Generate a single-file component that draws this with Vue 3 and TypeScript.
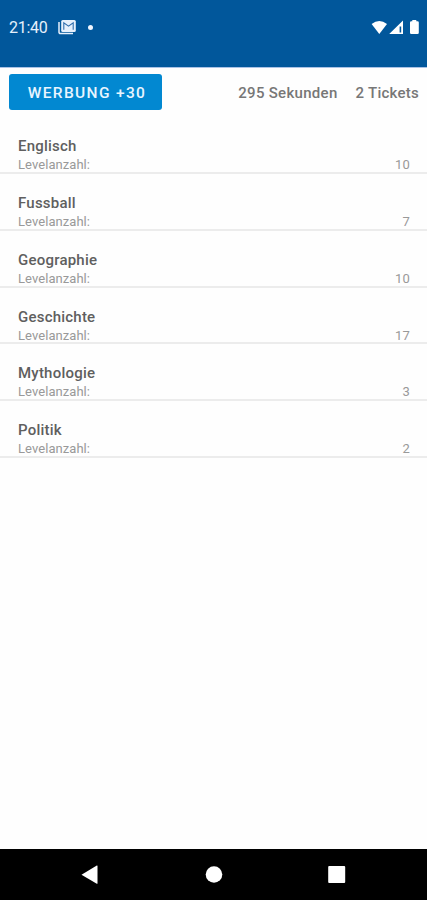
<script setup lang="ts">
interface Category {
  name: string
  levels: number
}

const categories: Category[] = [
  { name: 'Englisch', levels: 10 },
  { name: 'Fussball', levels: 7 },
  { name: 'Geographie', levels: 10 },
  { name: 'Geschichte', levels: 17 },
  { name: 'Mythologie', levels: 3 },
  { name: 'Politik', levels: 2 },
]
</script>

<template>
  <div class="screen">
    <header class="status">
      <span class="clock">21:40</span>
      <svg class="mail" width="18" height="15" viewBox="0 0 18 15">
        <path d="M1 2v10.2a1.3 1.3 0 0 0 1.3 1.3H15" fill="none" stroke="#e6f0fc" stroke-width="1.5" />
        <rect x="3.2" y="0" width="14.6" height="12" rx="1.5" fill="#e6f0fc" />
        <path d="M5.8 9.8V2.8l4.7 3.3L15.2 2.8v7" fill="none" stroke="#2f6dac" stroke-width="1.1" />
      </svg>
      <span class="dot"></span>
      <svg class="signals" width="50" height="16" viewBox="0 0 50 16">
        <path d="M0.6 4.1Q8.3-1.9 16 4.1L8.3 14Z" fill="#fff" />
        <path d="M32 0.4V14H18.2ZM28.6 6.4v6.2h1.6V6.4Z" fill="#fff" fill-rule="evenodd" />
        <path d="M41.3 1.3V.1h4v1.2h1.2q1.3 0 1.3 1.3v10.2q0 1.2-1.3 1.2h-6.2q-1.3 0-1.3-1.2V2.6q0-1.3 1.3-1.3Z" fill="#fff" />
      </svg>
    </header>
    <section class="toolbar">
      <button class="ad" type="button">WERBUNG +30</button>
      <span class="seconds">295 Sekunden</span>
      <span class="tickets">2 Tickets</span>
    </section>
    <ul class="list">
      <li v-for="category in categories" :key="category.name" class="row">
        <div class="name">{{ category.name }}</div>
        <div class="detail">
          <span class="label">Levelanzahl:</span>
          <span>{{ category.levels }}</span>
        </div>
      </li>
    </ul>
    <nav class="nav">
      <svg width="18" height="20" viewBox="0 0 18 20"><path d="M.5 9.7 15.8.6Q16.5.3 16.5 1.1V18.2Q16.5 19 15.8 18.7Z" fill="#fff" /></svg>
      <svg width="18" height="20" viewBox="0 0 18 20"><circle cx="9" cy="9.5" r="8.3" fill="#fff" /></svg>
      <svg width="18" height="20" viewBox="0 0 18 20"><rect x="0.2" y="1" width="17" height="17" rx="1" fill="#fff" /></svg>
    </nav>
  </div>
</template>

<style>
body {
  background: #fff;
}
</style>

<style scoped>
.screen {
  box-sizing: border-box;
  width: 427px;
  height: 900px;
  display: flex;
  flex-direction: column;
  background: #fefefe;
  font-family: Roboto, sans-serif;
  overflow: hidden;
}
.status {
  box-sizing: border-box;
  height: 68px;
  flex: none;
  display: flex;
  align-items: flex-start;
  padding: 20px 6px 0 9px;
  background: #01579b;
  border-bottom: 1px solid #a9c2e6;
}
.clock {
  width: 49px;
  font-size: 16px;
  line-height: 16px;
  letter-spacing: -0.3px;
  color: #e6f0fc;
}
.mail {
  flex: none;
}
.dot {
  width: 5px;
  height: 5px;
  margin: 5px 0 0 12px;
  border-radius: 50%;
  background: #f0f6ff;
}
.signals {
  margin-left: auto;
}
.toolbar {
  height: 49.2px;
  flex: none;
  display: flex;
  align-items: center;
  padding: 0 8px 0 9px;
  font-size: 15px;
  font-weight: 500;
  color: #777;
}
.ad {
  width: 153px;
  height: 36px;
  margin-bottom: 1px;
  padding: 2px 0 0 3px;
  border: 0;
  border-radius: 3px;
  background: #0288d1;
  color: #e9f5ff;
  font: 500 15.5px/20px Roboto, sans-serif;
  letter-spacing: 1.35px;
}
.seconds {
  margin-left: auto;
  letter-spacing: 0.3px;
}
.tickets {
  margin-left: 18px;
  letter-spacing: 0.25px;
}
.list {
  flex: 1;
  margin: 0;
  padding: 0;
  list-style: none;
}
.row {
  box-sizing: border-box;
  height: 56.8px;
  padding: 20px 17px 0 18px;
  border-bottom: 2px solid #ececec;
}
.name {
  font-size: 15px;
  line-height: 18px;
  font-weight: 500;
  letter-spacing: 0.22px;
  color: #5f5f5f;
}
.detail {
  display: flex;
  justify-content: space-between;
  font-size: 13px;
  line-height: 19px;
  letter-spacing: 0.2px;
  color: #999;
}
.label {
  letter-spacing: 0.06px;
}
.nav {
  box-sizing: border-box;
  height: 51px;
  flex: none;
  display: flex;
  justify-content: space-between;
  align-items: center;
  padding: 0 81px;
  background: #000;
}
</style>
